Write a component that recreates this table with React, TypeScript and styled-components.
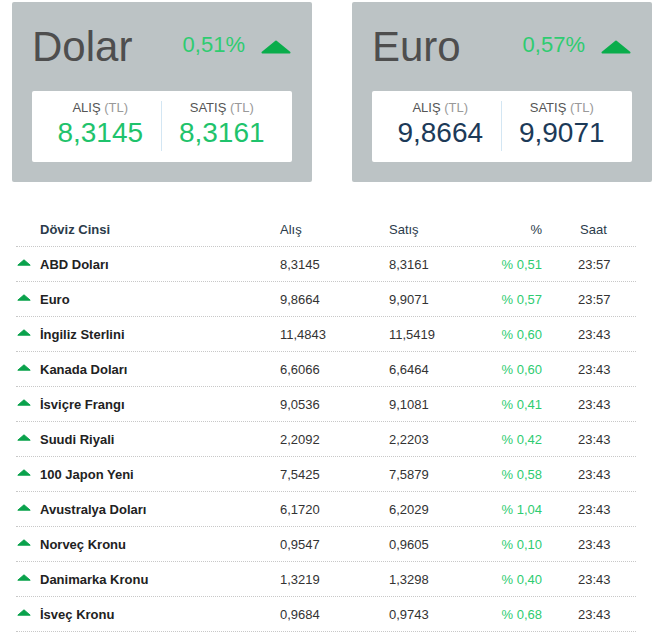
import React from "react";
import styled, {createGlobalStyle} from "styled-components";

const GlobalStyle = createGlobalStyle`
  html, body {
    margin: 0;
    padding: 0;
    background: #ffffff;
    font-family: "Liberation Sans", Arial, sans-serif;
  }
`

const Page = styled.div`
  width: 654px;
  padding-top: 2px;
`

const Cards = styled.div`
  display: flex;
  gap: 40px;
  padding-left: 12px;
`

const Card = styled.div`
  width: 300px;
  height: 180px;
  box-sizing: border-box;
  padding: 20px;
  background-color: #bcc3c5;
  border-radius: 2px;
`

const CardHead = styled.div`
  display: flex;
  align-items: center;
  height: 50px;
  padding-right: 1px;
`

const Title = styled.div`
  flex: 1;
  font-size: 42px;
  line-height: 42px;
  color: #4e4e4e;
`

const Change = styled.div`
  font-size: 22px;
  line-height: 22px;
  color: #2ecc71;
  margin-right: 16px;
  margin-top: -4px;
`

const PriceBox = styled.div`
  display: flex;
  margin-top: 19px;
  height: 71px;
  box-sizing: border-box;
  padding: 10px 10px 11px 8px;
  background-color: #ffffff;
  border-radius: 2px;
`

const PriceCol = styled.div<{ $divider?: boolean }>`
  flex: 1;
  display: flex;
  flex-direction: column;
  align-items: center;
  border-left: ${props => props.$divider ? '1px solid #d3e6f3' : 'none'};
`

const Label = styled.div`
  font-size: 13px;
  line-height: 14px;
  color: #555555;

  span {
    color: #999999;
  }
`

const Value = styled.div<{ $color: string }>`
  margin-top: 4px;
  font-size: 28px;
  line-height: 28px;
  color: ${props => props.$color};
`

const Table = styled.div`
  width: 620px;
  margin: 30px 0 0 16px;
  font-size: 13px;
`

const Row = styled.div<{ $head?: boolean }>`
  display: grid;
  grid-template-columns: 24px 240px 109px 90px 63px 94px;
  align-items: center;
  height: 35px;
  border-bottom: 1px dotted #c8c8c8;
  box-sizing: border-box;
  color: ${props => props.$head ? '#2b3b4b' : '#333333'};
`

const Arrow = styled.div`
  display: flex;
  align-items: center;
  padding-left: 1px;
  margin-top: -3px;
`

const Name = styled.div`
  font-weight: bold;
  color: #222222;
`

const HeadName = styled.div`
  font-weight: bold;
  color: #2b3b4b;
`

const Cell = styled.div<{ $align?: string, $green?: boolean, $pad?: number }>`
  text-align: ${props => props.$align || 'left'};
  padding-left: ${props => props.$pad || 0}px;
  color: ${props => props.$green ? '#2ecc71' : 'inherit'};
`

const BigArrow = () => (
    <svg width="30" height="14" viewBox="0 0 30 14">
        <polygon points="15,1.5 28.5,12.5 1.5,12.5" fill="#0aad4c" stroke="#0aad4c" strokeWidth="2" strokeLinejoin="round"/>
    </svg>
)

const SmallArrow = () => (
    <svg width="14" height="7" viewBox="0 0 14 7">
        <polygon points="7,0.8 13.2,6.2 0.8,6.2" fill="#0aa24c" stroke="#0aa24c" strokeWidth="1" strokeLinejoin="round"/>
    </svg>
)

const cards = [
    {title: "Dolar", change: "0,51%", buy: "8,3145", sell: "8,3161", color: "#1fc36c"},
    {title: "Euro", change: "0,57%", buy: "9,8664", sell: "9,9071", color: "#1c3a58"},
]

const rates = [
    ["ABD Doları", "8,3145", "8,3161", "% 0,51", "23:57"],
    ["Euro", "9,8664", "9,9071", "% 0,57", "23:57"],
    ["İngiliz Sterlini", "11,4843", "11,5419", "% 0,60", "23:43"],
    ["Kanada Doları", "6,6066", "6,6464", "% 0,60", "23:43"],
    ["İsviçre Frangı", "9,0536", "9,1081", "% 0,41", "23:43"],
    ["Suudi Riyali", "2,2092", "2,2203", "% 0,42", "23:43"],
    ["100 Japon Yeni", "7,5425", "7,5879", "% 0,58", "23:43"],
    ["Avustralya Doları", "6,1720", "6,2029", "% 1,04", "23:43"],
    ["Norveç Kronu", "0,9547", "0,9605", "% 0,10", "23:43"],
    ["Danimarka Kronu", "1,3219", "1,3298", "% 0,40", "23:43"],
    ["İsveç Kronu", "0,9684", "0,9743", "% 0,68", "23:43"],
]

export default function App() {
    return (
        <Page>
            <GlobalStyle/>
            <Cards>
                {cards.map((card) => (
                    <Card key={card.title}>
                        <CardHead>
                            <Title>{card.title}</Title>
                            <Change>{card.change}</Change>
                            <BigArrow/>
                        </CardHead>
                        <PriceBox>
                            <PriceCol>
                                <Label>ALIŞ <span>(TL)</span></Label>
                                <Value $color={card.color}>{card.buy}</Value>
                            </PriceCol>
                            <PriceCol $divider>
                                <Label>SATIŞ <span>(TL)</span></Label>
                                <Value $color={card.color}>{card.sell}</Value>
                            </PriceCol>
                        </PriceBox>
                    </Card>
                ))}
            </Cards>
            <Table>
                <Row $head>
                    <div/>
                    <HeadName>Döviz Cinsi</HeadName>
                    <Cell>Alış</Cell>
                    <Cell>Satış</Cell>
                    <Cell $align="right">%</Cell>
                    <Cell $pad={38}>Saat</Cell>
                </Row>
                {rates.map((r) => (
                    <Row key={r[0]}>
                        <Arrow><SmallArrow/></Arrow>
                        <Name>{r[0]}</Name>
                        <Cell>{r[1]}</Cell>
                        <Cell>{r[2]}</Cell>
                        <Cell $align="right" $green>{r[3]}</Cell>
                        <Cell $pad={36}>{r[4]}</Cell>
                    </Row>
                ))}
            </Table>
        </Page>
    )
}
